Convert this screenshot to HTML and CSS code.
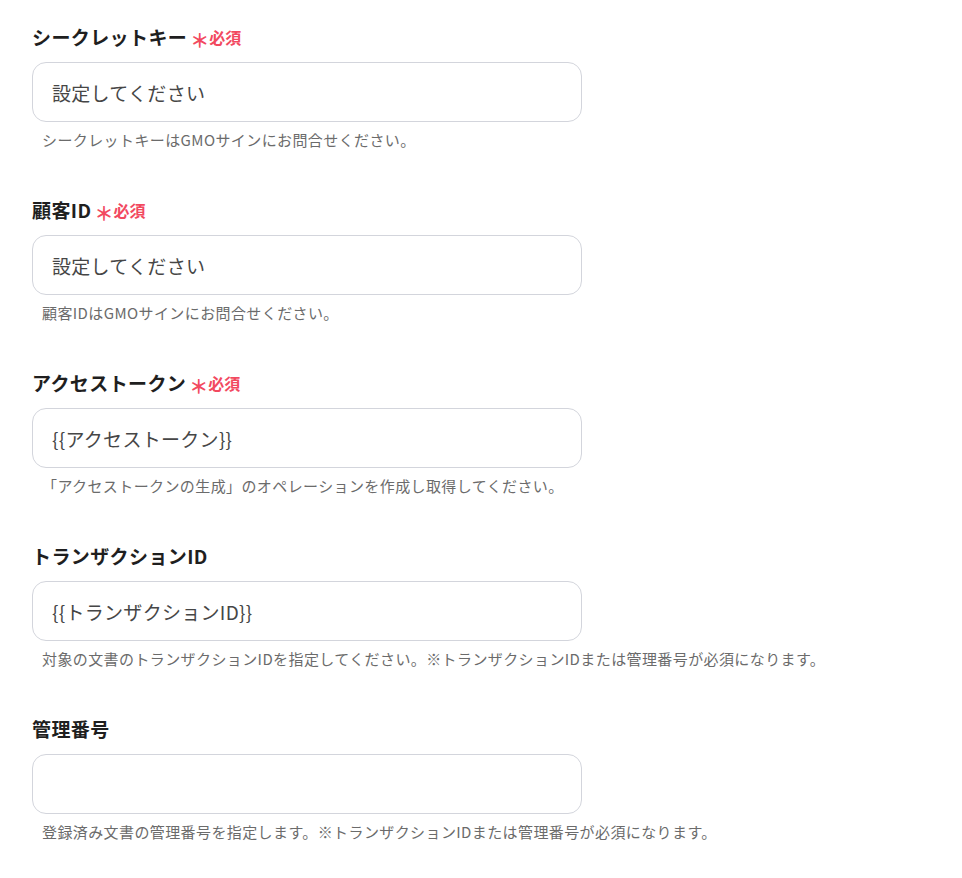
FILE: index.html
```html
<!DOCTYPE html>
<html lang="ja">
<head>
<meta charset="utf-8">
<link rel="stylesheet" href="styles.css">
</head>
<body>
<div class="form">
  <div class="field">
    <div class="label">シークレットキー<span class="req"><span class="ast">＊</span>必須</span></div>
    <div class="input placeholder">設定してください</div>
    <div class="help">シークレットキーはGMOサインにお問合せください。</div>
  </div>
  <div class="field">
    <div class="label">顧客ID<span class="req"><span class="ast">＊</span>必須</span></div>
    <div class="input placeholder">設定してください</div>
    <div class="help">顧客IDはGMOサインにお問合せください。</div>
  </div>
  <div class="field">
    <div class="label">アクセストークン<span class="req"><span class="ast">＊</span>必須</span></div>
    <div class="input">{{アクセストークン}}</div>
    <div class="help">「アクセストークンの生成」のオペレーションを作成し取得してください。</div>
  </div>
  <div class="field">
    <div class="label">トランザクションID</div>
    <div class="input">{{トランザクションID}}</div>
    <div class="help">対象の文書のトランザクションIDを指定してください。※トランザクションIDまたは管理番号が必須になります。</div>
  </div>
  <div class="field">
    <div class="label">管理番号</div>
    <div class="input"></div>
    <div class="help">登録済み文書の管理番号を指定します。※トランザクションIDまたは管理番号が必須になります。</div>
  </div>
</div>
</body>
</html>
```
FILE: styles.css
```css
html, body {
  margin: 0;
  padding: 0;
  background: #ffffff;
}
body {
  font-family: "Noto Sans CJK JP", "Noto Sans", sans-serif;
  color: #222222;
}
.form {
  padding: 24px 0 0 32px;
  display: flex;
  flex-direction: column;
  gap: 46px;
}
.field {
  display: flex;
  flex-direction: column;
}
.label {
  font-size: 19px;
  line-height: 26px;
  font-weight: 700;
  letter-spacing: 0.4px;
  color: #1f1f1f;
  display: flex;
  align-items: center;
}
.req {
  color: #f2495f;
  font-size: 16px;
  font-weight: 700;
  letter-spacing: 0;
  margin-left: 3px;
  display: inline-flex;
  align-items: center;
}
.ast {
  font-size: 19px;
  line-height: 20px;
  position: relative;
  top: 3px;
  margin-right: 0;
}
.input {
  margin-top: 12px;
  width: 550px;
  height: 60px;
  box-sizing: border-box;
  border: 1px solid #d3d5dc;
  border-radius: 14px;
  padding: 0 19px;
  display: flex;
  align-items: center;
  font-size: 19px;
  letter-spacing: 0.3px;
  color: #464646;
}
.help {
  margin-top: 7px;
  padding-left: 10px;
  font-size: 15px;
  line-height: 22px;
  letter-spacing: 0.4px;
  color: #6b6b6b;
}
```
